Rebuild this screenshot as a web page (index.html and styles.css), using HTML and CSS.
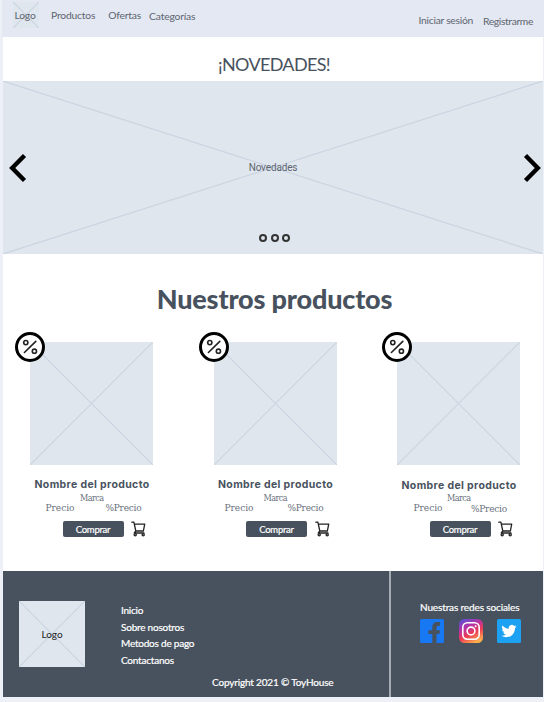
FILE: index.html
```html
<!DOCTYPE html>
<html lang="es">
<head>
<meta charset="utf-8">
<title>ToyHouse</title>
<link rel="stylesheet" href="styles.css">
</head>
<body>
<svg class="defs" aria-hidden="true">
  <defs>
    <symbol id="cross" viewBox="0 0 100 100" preserveAspectRatio="none"><path d="M0 0L100 100M100 0L0 100" fill="none" stroke="#cbd5e1" stroke-width="1.2" vector-effect="non-scaling-stroke"/></symbol>
    <symbol id="percent" viewBox="0 0 30 30"><circle cx="15" cy="15" r="13.5" fill="#fff" stroke="#000" stroke-width="3"/><g fill="none" stroke="#222" stroke-width="1.6" stroke-linecap="round"><path d="M9.4 20.5L20.8 9.4"/><circle cx="10.8" cy="10.6" r="2.1"/><circle cx="19.4" cy="19.2" r="2.1"/></g></symbol>
    <symbol id="cart" viewBox="0 0 15 16"><g fill="none" stroke="#222" stroke-width="1.3" stroke-linejoin="round" stroke-linecap="round"><path d="M.8 1.2H2.9L4.8 10H12.4L13.7 3.2H3.4M4.8 10L3.3 12H13"/><circle cx="4.2" cy="13.7" r="1.1"/><circle cx="12.2" cy="13.7" r="1.1"/></g></symbol>
    <linearGradient id="insta" x1=".15" y1="0" x2=".65" y2="1"><stop offset="0" stop-color="#5b50d6"/><stop offset=".35" stop-color="#b732a5"/><stop offset=".65" stop-color="#ee3c55"/><stop offset="1" stop-color="#fdb04b"/></linearGradient>
  </defs>
</svg>
<div class="page">
  <header class="topbar">
    <a class="logo"><svg class="cross"><use href="#cross"/></svg><span>Logo</span></a>
    <nav class="nav">
      <a class="nav-products">Productos</a><a class="nav-offers">Ofertas</a><a class="nav-categories">Categorías</a>
    </nav>
    <div class="account"><a class="login">Iniciar sesión</a><a class="register">Registrarme</a></div>
  </header>
  <h2 class="news-title"><span>¡NOVEDADES!</span></h2>
  <section class="hero">
    <svg class="cross"><use href="#cross"/></svg>
    <svg class="arrow" viewBox="0 0 18 30"><path d="M15.5 2.5L3.2 15L15.5 27.5" fill="none" stroke="#000" stroke-width="4.4"/></svg>
    <span class="hero-label">Novedades</span>
    <svg class="arrow" viewBox="0 0 18 30"><path d="M2.5 2.5L14.8 15L2.5 27.5" fill="none" stroke="#000" stroke-width="4.4"/></svg>
    <div class="dots"><i></i><i></i><i></i></div>
  </section>
  <main>
    <h1><span>Nuestros productos</span></h1>
    <div class="products">
      <article class="card">
        <div class="photo"><svg class="cross"><use href="#cross"/></svg><svg class="badge"><use href="#percent"/></svg></div>
        <h3>Nombre del producto</h3>
        <p class="brand">Marca</p>
        <div class="prices"><span>Precio</span><span class="sale">%Precio</span></div>
        <div class="buy"><button>Comprar</button><svg class="cart"><use href="#cart"/></svg></div>
      </article>
      <article class="card second">
        <div class="photo"><svg class="cross"><use href="#cross"/></svg><svg class="badge"><use href="#percent"/></svg></div>
        <h3>Nombre del producto</h3>
        <p class="brand">Marca</p>
        <div class="prices"><span>Precio</span><span class="sale">%Precio</span></div>
        <div class="buy"><button>Comprar</button><svg class="cart"><use href="#cart"/></svg></div>
      </article>
      <article class="card third">
        <div class="photo"><svg class="cross"><use href="#cross"/></svg><svg class="badge"><use href="#percent"/></svg></div>
        <h3>Nombre del producto</h3>
        <p class="brand">Marca</p>
        <div class="prices"><span>Precio</span><span class="sale">%Precio</span></div>
        <div class="buy"><button>Comprar</button><svg class="cart"><use href="#cart"/></svg></div>
      </article>
    </div>
  </main>
  <footer>
    <div class="footer-main">
      <div class="footer-top">
        <div class="footer-logo"><svg class="cross"><use href="#cross"/></svg><span>Logo</span></div>
        <nav class="links"><a>Inicio</a><a>Sobre nosotros</a><a>Metodos de pago</a><a>Contactanos</a></nav>
      </div>
      <p class="copyright">Copyright 2021 © ToyHouse</p>
    </div>
    <div class="social">
      <p>Nuestras redes sociales</p>
      <div class="icons">
        <svg viewBox="0 0 24 24"><path fill="#1877f2" d="M1.5 0H22.5Q24 0 24 1.5V22.5Q24 24 22.5 24H18.7V14.9H19.5L20 11.2H16.5V8.9C16.5 7.4 17.2 6.7 18.7 6.7H20V3.3C19 3.1 18 3 17 3C14 3 12.3 5 12.3 8V11.2H8.4V14.9H12.3V24H1.5Q0 24 0 22.5V1.5Q0 0 1.5 0Z"/><path fill="#1877f2" d="M16.5 14.9H20V24H16.5Z"/></svg>
        <svg viewBox="0 0 24 24"><rect width="24" height="24" rx="5.5" fill="url(#insta)"/><g fill="none" stroke="#fff" stroke-width="1.6"><rect x="3.8" y="3.8" width="16.4" height="16.4" rx="4.6"/><circle cx="12" cy="12" r="3.9"/></g><circle cx="16.6" cy="7.3" r="1" fill="#fff"/></svg>
        <svg viewBox="0 0 24 24"><rect width="24" height="24" rx="1.5" fill="#1da1f2"/><path fill="#fff" transform="translate(4.4 4.5) scale(.63)" d="M23.95 4.57a10 10 0 0 1-2.82.77 4.96 4.96 0 0 0 2.16-2.72c-.95.55-2 .96-3.12 1.18a4.92 4.92 0 0 0-8.39 4.48C7.69 8.1 4.07 6.13 1.64 3.16a4.92 4.92 0 0 0 1.52 6.57 4.9 4.9 0 0 1-2.23-.61v.06a4.92 4.92 0 0 0 3.95 4.83 5 5 0 0 1-2.21.08 4.94 4.94 0 0 0 4.6 3.42A9.87 9.87 0 0 1 0 19.54a14 14 0 0 0 7.55 2.21c9.05 0 14-7.5 14-13.98 0-.21 0-.42-.02-.63a9.94 9.94 0 0 0 2.42-2.57Z"/></svg>
      </div>
    </div>
  </footer>
</div>
</body>
</html>
```
FILE: styles.css
```css
* { box-sizing: border-box; }
body { margin: 0; background: #edf0f7; font-family: Lato, sans-serif; color: #48525e; }
h1, h2, h3, p { margin: 0; }
a, span, h3, p { white-space: nowrap; }
svg { display: block; }
.defs { position: absolute; width: 0; height: 0; }
.page { width: 540px; height: 697px; margin-left: 3px; background: #fff; display: flex; flex-direction: column; }
.cross { position: absolute; inset: 0; width: 100%; height: 100%; }

.topbar { height: 37px; margin: 0 -1px; padding-left: 1px; background: #e4e8f2; display: flex; align-items: flex-start; font-size: 10.3px; line-height: 12px; letter-spacing: -.18px; color: #5d6571; flex: none; }
.logo { position: relative; width: 26px; height: 26px; margin: 2px 0 0 10px; background: #dfe6ee; display: grid; place-items: center; }
.logo span { position: relative; left: -1px; }
.nav { display: flex; margin: 9px 0 0 12px; }
.nav-offers { margin-left: 13px; }
.nav-categories { margin: 1px 0 0 8px; }
.account { display: flex; gap: 10px; margin: 14px 11px 0 auto; letter-spacing: -.26px; }
.register { margin-top: 1px; letter-spacing: -.36px; }

.news-title { height: 44px; padding: 16px 0 0 2px; font-size: 18px; line-height: 22px; font-weight: 400; letter-spacing: -.65px; text-align: center; flex: none; }
.hero { position: relative; height: 173px; background: #dfe6ee; display: flex; align-items: center; justify-content: space-between; padding: 0 2px 0 6px; flex: none; }
.arrow { position: relative; width: 18px; height: 30px; }
.hero-label { position: relative; left: -2px; font: 10px/12px Roboto, sans-serif; color: #5d6571; letter-spacing: -.15px; }
.dots { position: absolute; left: 256px; bottom: 12px; display: flex; gap: 3.5px; }
.dots i { width: 8px; height: 8px; border: 2px solid #333; border-radius: 50%; }

main { flex: 1; }
h1 { padding: 27px 0 0 3px; font-size: 27px; line-height: 36px; font-weight: 900; letter-spacing: -.17px; text-align: center; }
.products { display: grid; grid-template-columns: repeat(3, 123px); column-gap: 60.5px; margin: 25px 0 0 27px; }
.photo { position: relative; height: 123px; background: #dfe6ee; }
.badge { position: absolute; left: -14.6px; top: -10px; width: 30px; height: 30px; }
h3 { margin: 13px 0 0 4.5px; font: 700 10.5px/13px Inter, sans-serif; letter-spacing: .36px; }
.third h3 { margin-top: 14px; margin-bottom: -1px; }
.brand { margin: 2px 0 0 50px; font: 9px/10px "DejaVu Serif Condensed", "DejaVu Serif", serif; letter-spacing: -.55px; color: #68717d; }
.prices { display: flex; margin-left: 15.5px; font: 10px/10px "DejaVu Serif Condensed", "DejaVu Serif", serif; letter-spacing: 0; height: 10px; color: #68717d; }
.sale { margin-left: 31px; letter-spacing: -.25px; }
.buy { display: flex; gap: 7.5px; margin: 8px 0 0 32.5px; }
button { width: 61px; height: 16px; padding: 0; border: 0; border-radius: 2px; background: #48525e; color: #fff; font: 9.5px/15px Lato, sans-serif; letter-spacing: -.25px; -webkit-text-stroke: .2px #fff; }
.cart { width: 15px; height: 16px; }
.second .prices { margin-left: 11px; }
.second .sale { margin-left: 34px; }
.third .prices { margin-left: 16.5px; }
.third .sale { margin: 1px 0 0 28.5px; }

footer { height: 126px; background: #48525e; color: #fff; display: flex; font-size: 10px; letter-spacing: -.22px; -webkit-text-stroke: .2px currentColor; flex: none; }
.footer-main { width: 388px; border-right: 2px solid #a6acb3; flex: none; }
.footer-top { display: flex; padding: 30px 0 0 16px; }
.footer-logo { position: relative; width: 66px; height: 66px; background: #dfe6ee; color: #222; display: grid; place-items: center; -webkit-text-stroke: 0; letter-spacing: 0; }
.footer-logo span { position: relative; }
.links { display: flex; flex-direction: column; height: 66px; padding-top: 1px; margin-left: 36px; line-height: 16.6px; }
.copyright { margin: 9px 0 0 209px; line-height: 13px; letter-spacing: -.17px; }
.social { padding: 30px 0 0 29px; letter-spacing: -.13px; }
.social p { line-height: 13px; }
.icons { display: flex; gap: 14.5px; margin-top: 5px; }
.icons svg { width: 24px; height: 24px; }
```
